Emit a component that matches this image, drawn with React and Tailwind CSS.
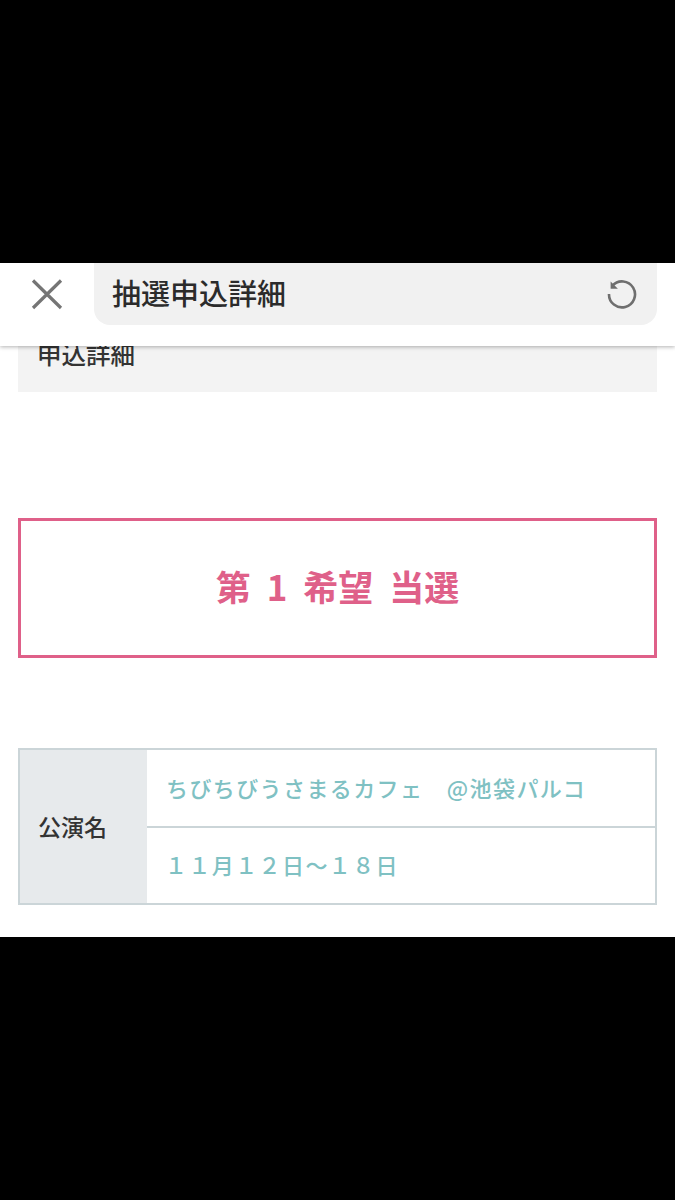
export default function App() {
  const font = { fontFamily: '"Noto Sans CJK JP", "Noto Sans", sans-serif' };
  return (
    <div className="w-[675px] h-[1200px] bg-black flex flex-col overflow-hidden" style={font}>
      <div className="h-[263px] shrink-0" />
      <main className="h-[674px] shrink-0 bg-white flex flex-col">
        <header className="relative z-10 h-[83px] shrink-0 bg-white shadow-[0_1px_4px_rgba(0,0,0,0.3)] flex items-start pr-[18px]">
          <div className="w-[94px] h-[62px] flex items-center justify-center shrink-0">
            <svg width="34" height="34" viewBox="0 0 34 34" fill="none" stroke="#757575" strokeWidth="3.2">
              <path d="M3 3.5 L31 31 M31 3.5 L3 31" />
            </svg>
          </div>
          <div className="flex-1 h-[62px] bg-[#f1f1f1] rounded-b-[16px] flex items-center justify-between pl-[18px] pr-[20px]">
            <span className="text-[29px] font-medium text-[#2b2b2b] leading-none -mt-[3px]">抽選申込詳細</span>
            <svg width="30" height="30" viewBox="0 0 30 30" fill="none">
              <path d="M5.4 6.6 A13 13 0 1 1 2 15" stroke="#6f6f6f" strokeWidth="2.6" />
              <path d="M3.6 2.5 L3.6 9.8 L10.9 9.8 Z" fill="#6f6f6f" />
            </svg>
          </div>
        </header>
        <div className="mx-[18px] h-[46px] shrink-0 bg-[#f3f3f3] overflow-hidden pl-[19px]">
          <div className="-mt-[4px] text-[24.5px] font-medium leading-[24px] text-[#333333]">申込詳細</div>
        </div>
        <div className="mx-[18px] mt-[126px] h-[140px] shrink-0 border-[3px] border-[#df6089] flex items-center justify-center">
          <span className="text-[35px] font-bold text-[#df6089] leading-none whitespace-pre [word-spacing:8px] -mt-[5px]">第 1 希望 当選</span>
        </div>
        <div className="mx-[18px] mt-[90px] h-[157px] shrink-0 border-2 border-[#cbd5d8] flex">
          <div className="w-[127px] shrink-0 bg-[#e7eaec] flex items-center pl-[18px]">
            <span className="text-[23px] font-medium text-[#333333] leading-none -mt-[1px]">公演名</span>
          </div>
          <div className="flex-1 flex flex-col">
            <div className="h-[78px] border-b-2 border-[#cbd5d8] flex items-center pl-[19px]">
              <span className="text-[22px] font-medium tracking-[1.4px] text-[#7fc1c3] leading-none whitespace-pre -mt-[3px]">ちびちびうさまるカフェ　@池袋パルコ</span>
            </div>
            <div className="flex-1 flex items-center pl-[18px]">
              <span className="text-[22px] font-medium tracking-[1.4px] text-[#7fc1c3] leading-none whitespace-pre -mt-[3px]">１１月１２日〜１８日</span>
            </div>
          </div>
        </div>
      </main>
    </div>
  );
}
